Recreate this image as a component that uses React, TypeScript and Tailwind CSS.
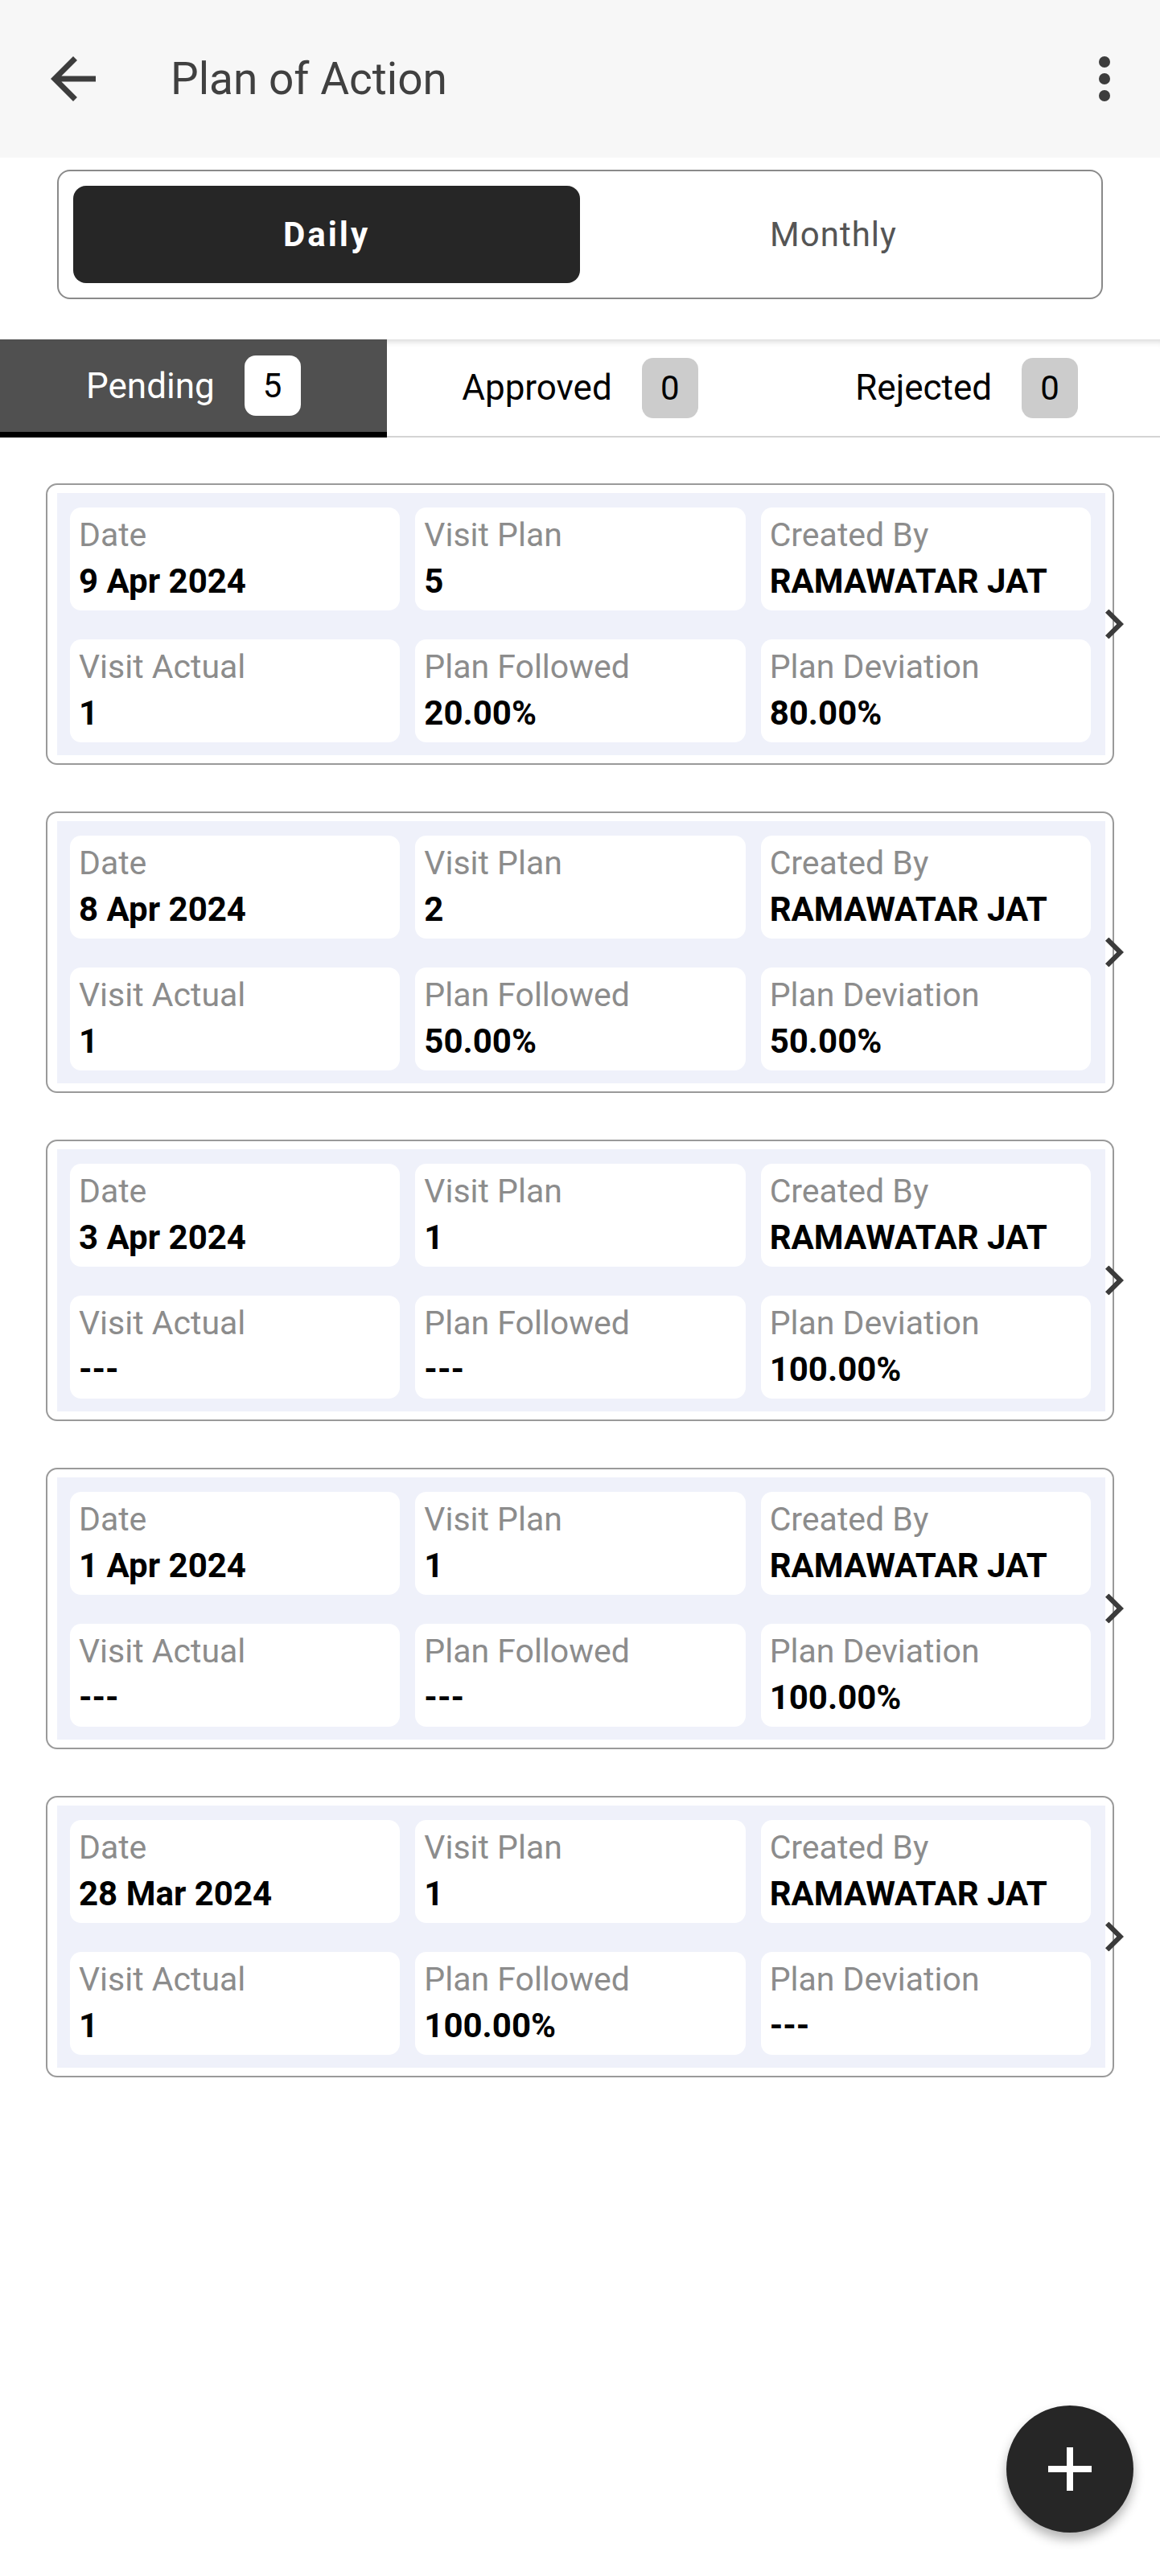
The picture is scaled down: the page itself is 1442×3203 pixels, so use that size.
import { useState } from 'react';

type Plan = {
  date: string;
  visitPlan: string;
  createdBy: string;
  visitActual: string;
  planFollowed: string;
  planDeviation: string;
};

const plans: Plan[] = [
  { date: '9 Apr 2024', visitPlan: '5', createdBy: 'RAMAWATAR JAT', visitActual: '1', planFollowed: '20.00%', planDeviation: '80.00%' },
  { date: '8 Apr 2024', visitPlan: '2', createdBy: 'RAMAWATAR JAT', visitActual: '1', planFollowed: '50.00%', planDeviation: '50.00%' },
  { date: '3 Apr 2024', visitPlan: '1', createdBy: 'RAMAWATAR JAT', visitActual: '---', planFollowed: '---', planDeviation: '100.00%' },
  { date: '1 Apr 2024', visitPlan: '1', createdBy: 'RAMAWATAR JAT', visitActual: '---', planFollowed: '---', planDeviation: '100.00%' },
  { date: '28 Mar 2024', visitPlan: '1', createdBy: 'RAMAWATAR JAT', visitActual: '1', planFollowed: '100.00%', planDeviation: '---' },
];

function Cell({ label, value }: { label: string; value: string }) {
  return (
    <div className="h-[128px] rounded-[14px] bg-white pl-[11px] pt-[6px]">
      <div className="text-[41px] leading-[57px] text-[#8c8c8c]">{label}</div>
      <div className="text-[42px] font-bold leading-[57px] text-black">{value}</div>
    </div>
  );
}

function PlanCard({ plan }: { plan: Plan }) {
  return (
    <div className="relative rounded-[14px] border-2 border-[#9a9a9a] bg-white pl-[12px] pr-[9px] py-[10px]">
      <div className="grid grid-cols-3 gap-x-[19px] gap-y-[36px] bg-[#eff1fa] pl-[16px] pr-[18px] pt-[18px] pb-[16px]">
        <Cell label="Date" value={plan.date} />
        <Cell label="Visit Plan" value={plan.visitPlan} />
        <Cell label="Created By" value={plan.createdBy} />
        <Cell label="Visit Actual" value={plan.visitActual} />
        <Cell label="Plan Followed" value={plan.planFollowed} />
        <Cell label="Plan Deviation" value={plan.planDeviation} />
      </div>
      {/* chevron sits on the right border */}
      <svg
        className="absolute right-[-14px] top-1/2 -translate-y-1/2"
        width="23"
        height="37"
        viewBox="8.59 6 7.41 12"
        preserveAspectRatio="none"
      >
        <path d="M10 6L8.59 7.41 13.17 12l-4.58 4.59L10 18l6-6z" fill="#3b3b3b" />
      </svg>
    </div>
  );
}

export default function App() {
  const [mode, setMode] = useState<'daily' | 'monthly'>('daily');
  const [tab, setTab] = useState<'pending' | 'approved' | 'rejected'>('pending');

  const tabs = [
    { key: 'pending' as const, label: 'Pending', count: 5 },
    { key: 'approved' as const, label: 'Approved', count: 0 },
    { key: 'rejected' as const, label: 'Rejected', count: 0 },
  ];

  return (
    <div className="relative min-h-[3203px] w-full bg-white font-[Roboto,sans-serif]">
      {/* Header */}
      <div className="flex h-[196px] items-center bg-[#f7f7f7] pl-[49px] pr-[27px]">
        <svg width="84" height="84" viewBox="0 0 24 24">
          <path d="M20 11H7.83l5.59-5.59L12 4l-8 8 8 8 1.41-1.41L7.83 13H20v-2z" fill="#3d3d3d" />
        </svg>
        <h1 className="ml-[79px] flex-1 text-[55px] font-normal text-[#404040]">Plan of Action</h1>
        <svg width="84" height="84" viewBox="0 0 24 24">
          <circle cx="12" cy="6" r="2" fill="#3d3d3d" />
          <circle cx="12" cy="12" r="2" fill="#3d3d3d" />
          <circle cx="12" cy="18" r="2" fill="#3d3d3d" />
        </svg>
      </div>

      {/* Daily / Monthly toggle */}
      <div className="mx-[71px] mt-[15px] flex rounded-[16px] border-2 border-[#8a8a8a] p-[18px]">
        <button
          onClick={() => setMode('daily')}
          className={`h-[121px] flex-1 rounded-[16px] text-[42px] ${
            mode === 'daily' ? 'bg-[#262626] font-bold tracking-[3px] text-white' : 'tracking-[1px] text-[#555555]'
          }`}
        >
          Daily
        </button>
        <button
          onClick={() => setMode('monthly')}
          className={`h-[121px] flex-1 rounded-[16px] text-[42px] ${
            mode === 'monthly' ? 'bg-[#262626] font-bold tracking-[3px] text-white' : 'tracking-[1px] text-[#555555]'
          }`}
        >
          Monthly
        </button>
      </div>

      {/* Status tabs */}
      <div className="mt-[50px] flex h-[122px] shadow-[inset_0_10px_8px_-8px_rgba(0,0,0,0.18)]">
        {tabs.map((t) => {
          const active = tab === t.key;
          return (
            <button
              key={t.key}
              onClick={() => setTab(t.key)}
              className={`flex flex-1 items-center justify-center gap-[37px] ${
                active ? 'border-b-[7px] border-black bg-[#505050] text-white' : 'border-b-2 border-[#d4d4d4] text-black'
              }`}
            >
              <span className="text-[44px]">{t.label}</span>
              <span
                className={`flex h-[75px] w-[70px] items-center justify-center rounded-[14px] text-[42px] text-black ${
                  active ? 'bg-white' : 'bg-[#cccccc]'
                }`}
              >
                {t.count}
              </span>
            </button>
          );
        })}
      </div>

      {/* Plan cards */}
      <div className="mx-[57px] mt-[57px] flex flex-col gap-[58px]">
        {plans.map((p) => (
          <PlanCard key={p.date} plan={p} />
        ))}
      </div>

      {/* Floating add button */}
      <button className="absolute bottom-[54px] right-[33px] flex h-[158px] w-[158px] items-center justify-center rounded-full bg-[#262626] shadow-[0_8px_14px_rgba(0,0,0,0.3)]">
        <svg width="54" height="54" viewBox="0 0 54 54">
          <rect x="23" y="0" width="8" height="54" fill="white" />
          <rect x="0" y="23" width="54" height="8" fill="white" />
        </svg>
      </button>
    </div>
  );
}
